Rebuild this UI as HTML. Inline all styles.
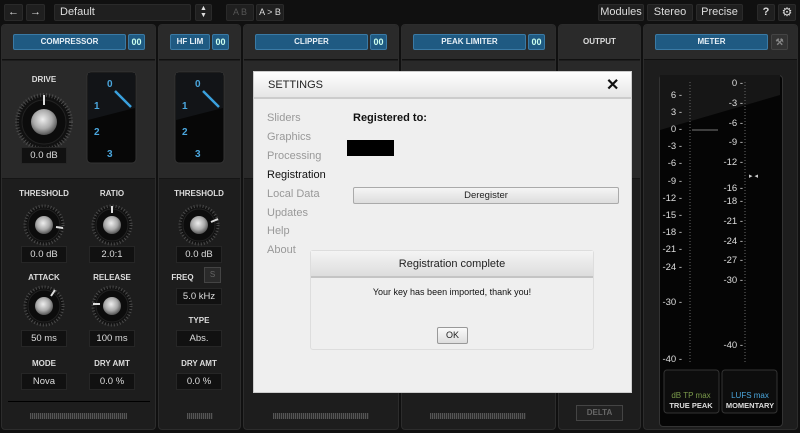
<!DOCTYPE html>
<html><head><meta charset="utf-8"><style>
*{box-sizing:border-box;margin:0;padding:0}
body{width:800px;height:433px;background:#101010;font-family:"Liberation Sans",sans-serif;position:relative;overflow:hidden}
.a{position:absolute}
.tb{position:absolute;top:4px;height:17px;background:#1f1f1f;border:1px solid #2a2a2a;border-radius:2px;color:#ddd;font-size:11px;line-height:15px;text-align:center}
.panel{position:absolute;top:24px;height:406px;background:#1d1d1d;border:1px solid #2c2c2c;border-radius:4px;overflow:hidden}
.ph{position:absolute;left:0;right:0;top:0;height:35px;background:#2a2a2a;border-bottom:1px solid #111}
.pu{position:absolute;left:0;right:0;top:36px;height:118px;background:#292929;border-bottom:1px solid #151515}
.hb{position:absolute;top:9px;height:16px;background:#1f5a82;border:1px solid #3a7aa5;border-radius:2px;color:#e8f0f6;font-size:8px;font-weight:bold;line-height:14px;text-align:center}
.lk{position:absolute;top:9px;width:17px;height:16px;background:#1f5a82;border:1px solid #3a7aa5;border-radius:2px;color:#cfe;font-size:9px;font-weight:bold;line-height:14px;text-align:center}
.lbl{position:absolute;color:#ddd;font-size:8px;font-weight:bold;text-align:center;width:60px}
.val{position:absolute;width:46px;height:17px;background:#111;border:1px solid #262626;color:#ddd;font-size:9.5px;line-height:15px;text-align:center}
.scr{position:absolute;height:6px;background:repeating-linear-gradient(90deg,#555 0 1px,#2a2a2a 1px 2px)}
.dsc{color:#999;font-size:11px;position:absolute;left:13px}
</style></head><body>
<div class="tb" style="left:4px;width:19px">&#8592;</div>
<div class="tb" style="left:26px;width:19px">&#8594;</div>
<div class="tb" style="left:54px;width:137px;text-align:left;padding-left:5px">Default</div>
<div class="tb" style="left:195px;width:17px;font-size:7px;line-height:7px">▲<br>▼</div>
<div class="tb" style="left:226px;width:28px;color:#555;font-size:9px">A B</div>
<div class="tb" style="left:256px;width:28px;font-size:9px">A &gt; B</div>
<div class="tb" style="left:598px;width:46px">Modules</div>
<div class="tb" style="left:647px;width:46px">Stereo</div>
<div class="tb" style="left:696px;width:47px">Precise</div>
<div class="tb" style="left:757px;width:18px;font-weight:bold">?</div>
<div class="tb" style="left:778px;width:18px;font-size:12px">⚙</div>

<div class="panel" style="left:1px;width:155px">
 <div class="ph"><div class="hb" style="left:11px;width:113px">COMPRESSOR</div><div class="lk" style="left:126px">00</div></div>
 <div class="pu"></div>
</div>
<div class="panel" style="left:158px;width:83px">
 <div class="ph"><div class="hb" style="left:11px;width:40px">HF LIM</div><div class="lk" style="left:53px">00</div></div>
 <div class="pu"></div>
</div>
<div class="panel" style="left:243px;width:156px">
 <div class="ph"><div class="hb" style="left:11px;width:113px">CLIPPER</div><div class="lk" style="left:126px">00</div></div>
 <div class="pu"></div>
</div>
<div class="panel" style="left:401px;width:155px">
 <div class="ph"><div class="hb" style="left:11px;width:113px">PEAK LIMITER</div><div class="lk" style="left:126px">00</div></div>
 <div class="pu"></div>
</div>
<div class="panel" style="left:558px;width:83px">
 <div class="ph"><div class="a" style="left:0;right:0;top:12px;text-align:center;color:#ddd;font-size:8px;font-weight:bold">OUTPUT</div></div>
 <div class="pu"></div>
 <div class="a" style="left:17px;top:380px;width:47px;height:16px;background:#222;border:1px solid #444;color:#666;font-size:8px;line-height:14px;text-align:center;font-weight:bold">DELTA</div>
</div>
<div class="panel" style="left:643px;width:155px">
 <div class="ph"><div class="hb" style="left:11px;width:113px">METER</div><div class="lk" style="left:127px;background:#333;border-color:#444;color:#888">⚒</div></div>
 <div class="a" style="left:15px;top:50px;width:124px;height:352px;background:#050505;border:1px solid #333;border-radius:4px"></div>
</div>

<svg class="a" style="left:0;top:0" width="800" height="433">
 <defs>
  <radialGradient id="kg" cx="45%" cy="40%" r="60%"><stop offset="0" stop-color="#eee"/><stop offset=".6" stop-color="#aaa"/><stop offset="1" stop-color="#555"/></radialGradient>
 </defs>
 <g transform="translate(44,122)"><circle r="27" fill="#111" stroke="#4a4a4a" stroke-width="4" stroke-dasharray="1 2"/><circle r="22" fill="#0c0c0c" stroke="#222"/><circle r="13" fill="url(#kg)"/><line x1="0" y1="-27" x2="0" y2="-17" stroke="#ddd" stroke-width="2"/></g>
 <g transform="translate(44,225)"><circle r="19" fill="#111" stroke="#4a4a4a" stroke-width="3" stroke-dasharray="1 2"/><circle r="16" fill="#0c0c0c" stroke="#222"/><circle r="9" fill="url(#kg)"/><line x1="12" y1="2" x2="19" y2="3" stroke="#ddd" stroke-width="2"/></g>
 <g transform="translate(112,225)"><circle r="19" fill="#111" stroke="#4a4a4a" stroke-width="3" stroke-dasharray="1 2"/><circle r="16" fill="#0c0c0c" stroke="#222"/><circle r="9" fill="url(#kg)"/><line x1="0" y1="-12" x2="0" y2="-19" stroke="#ddd" stroke-width="2"/></g>
 <g transform="translate(44,306)"><circle r="19" fill="#111" stroke="#4a4a4a" stroke-width="3" stroke-dasharray="1 2"/><circle r="16" fill="#0c0c0c" stroke="#222"/><circle r="9" fill="url(#kg)"/><line x1="7" y1="-10" x2="11" y2="-16" stroke="#ddd" stroke-width="2"/></g>
 <g transform="translate(112,306)"><circle r="19" fill="#111" stroke="#4a4a4a" stroke-width="3" stroke-dasharray="1 2"/><circle r="16" fill="#0c0c0c" stroke="#222"/><circle r="9" fill="url(#kg)"/><line x1="-12" y1="-2" x2="-19" y2="-2" stroke="#ddd" stroke-width="2"/></g>
 <g transform="translate(199,225)"><circle r="19" fill="#111" stroke="#4a4a4a" stroke-width="3" stroke-dasharray="1 2"/><circle r="16" fill="#0c0c0c" stroke="#222"/><circle r="9" fill="url(#kg)"/><line x1="12" y1="-3" x2="19" y2="-6" stroke="#ddd" stroke-width="2"/></g>
 <rect x="87" y="72" width="49" height="91" rx="4" fill="#070707" stroke="#333"/>
 <polygon points="88,73 135,73 135,108 88,120" fill="#121417"/>
 <line x1="115" y1="91" x2="131" y2="107" stroke="#3aa0dd" stroke-width="2.5"/>
 <rect x="175" y="72" width="49" height="91" rx="4" fill="#070707" stroke="#333"/>
 <polygon points="176,73 223,73 223,108 176,120" fill="#121417"/>
 <line x1="203" y1="91" x2="219" y2="107" stroke="#3aa0dd" stroke-width="2.5"/>
 <g fill="#4aa6dd" font-size="10" font-weight="bold" font-family="Liberation Sans">
  <text x="107" y="87">0</text><text x="94" y="109">1</text><text x="94" y="135">2</text><text x="107" y="157">3</text>
  <text x="195" y="87">0</text><text x="182" y="109">1</text><text x="182" y="135">2</text><text x="195" y="157">3</text>
 </g>
 <polygon points="660,75 780,75 780,95 660,130" fill="#161616"/>
 <line x1="690" y1="82" x2="690" y2="362" stroke="#666" stroke-dasharray="1 2"/>
 <line x1="745" y1="82" x2="745" y2="362" stroke="#666" stroke-dasharray="1 2"/>
 <line x1="692" y1="130" x2="718" y2="130" stroke="#777"/>
 <g fill="#ddd" font-size="9.5" font-family="Liberation Sans" text-anchor="end">
  <text x="682" y="98">6 -</text><text x="682" y="115">3 -</text><text x="682" y="132">0 -</text><text x="682" y="149">-3 -</text><text x="682" y="166">-6 -</text><text x="682" y="184">-9 -</text><text x="682" y="201">-12 -</text><text x="682" y="218">-15 -</text><text x="682" y="235">-18 -</text><text x="682" y="252">-21 -</text><text x="682" y="270">-24 -</text><text x="682" y="305">-30 -</text><text x="682" y="362">-40 -</text>
  <text x="743" y="86">0 -</text><text x="743" y="106">-3 -</text><text x="743" y="126">-6 -</text><text x="743" y="145">-9 -</text><text x="743" y="165">-12 -</text><text x="743" y="191">-16 -</text><text x="743" y="204">-18 -</text><text x="743" y="224">-21 -</text><text x="743" y="244">-24 -</text><text x="743" y="263">-27 -</text><text x="743" y="283">-30 -</text><text x="743" y="348">-40 -</text>
 </g>
 <text x="749" y="178" fill="#ccc" font-size="7">▸ ◂</text>
 <rect x="664" y="370" width="55" height="43" rx="3" fill="#0d0d0d" stroke="#333"/>
 <rect x="722" y="370" width="55" height="43" rx="3" fill="#0d0d0d" stroke="#333"/>
 <g font-size="8" font-family="Liberation Sans" text-anchor="middle">
  <text x="691" y="398" fill="#7a9a4a">dB TP max</text><text x="691" y="408" fill="#ddd" font-weight="bold" font-size="7.5">TRUE PEAK</text>
  <text x="750" y="398" fill="#4aa6dd">LUFS max</text><text x="750" y="408" fill="#ddd" font-weight="bold" font-size="7.5">MOMENTARY</text>
 </g>
</svg>

<div class="lbl" style="left:14px;top:75px">DRIVE</div>
<div class="val" style="left:21px;top:147px">0.0 dB</div>
<div class="lbl" style="left:14px;top:189px">THRESHOLD</div>
<div class="lbl" style="left:82px;top:189px">RATIO</div>
<div class="val" style="left:21px;top:246px">0.0 dB</div>
<div class="val" style="left:89px;top:246px">2.0:1</div>
<div class="lbl" style="left:14px;top:273px">ATTACK</div>
<div class="lbl" style="left:82px;top:273px">RELEASE</div>
<div class="val" style="left:21px;top:330px">50 ms</div>
<div class="val" style="left:89px;top:330px">100 ms</div>
<div class="lbl" style="left:14px;top:359px">MODE</div>
<div class="lbl" style="left:82px;top:359px">DRY AMT</div>
<div class="val" style="left:21px;top:373px">Nova</div>
<div class="val" style="left:89px;top:373px">0.0 %</div>
<div class="lbl" style="left:169px;top:189px">THRESHOLD</div>
<div class="val" style="left:176px;top:246px">0.0 dB</div>
<div class="lbl" style="left:160px;top:273px;width:45px">FREQ</div>
<div class="a" style="left:204px;top:267px;width:17px;height:16px;background:#2a2a2a;border:1px solid #444;color:#666;font-size:8px;text-align:center;line-height:14px">S</div>
<div class="val" style="left:176px;top:288px">5.0 kHz</div>
<div class="lbl" style="left:169px;top:316px">TYPE</div>
<div class="val" style="left:176px;top:330px">Abs.</div>
<div class="lbl" style="left:169px;top:359px">DRY AMT</div>
<div class="val" style="left:176px;top:373px">0.0 %</div>
<div class="a" style="left:8px;top:401px;width:142px;height:1px;background:#000"></div>
<div class="scr" style="left:30px;top:413px;width:97px"></div>
<div class="scr" style="left:187px;top:413px;width:26px"></div>
<div class="scr" style="left:273px;top:413px;width:96px"></div>
<div class="scr" style="left:430px;top:413px;width:96px"></div>

<div class="a" style="left:253px;top:71px;width:379px;height:322px;background:#efefef;border:1px solid #ccc">
 <div class="a" style="left:0;right:0;top:0;height:27px;background:linear-gradient(#fff,#e6e6e6);border-bottom:2px solid #ccc"></div>
 <div class="a" style="left:14px;top:7px;font-size:11px;color:#222">SETTINGS</div>
 <div class="a" style="left:352px;top:3px;font-size:16px;font-weight:bold;color:#111">✕</div>
 <div class="dsc" style="top:40px">Sliders</div>
 <div class="dsc" style="top:59px">Graphics</div>
 <div class="dsc" style="top:78px">Processing</div>
 <div class="dsc" style="top:97px;color:#111">Registration</div>
 <div class="dsc" style="top:116px">Local Data</div>
 <div class="dsc" style="top:135px">Updates</div>
 <div class="dsc" style="top:153px">Help</div>
 <div class="dsc" style="top:172px">About</div>
 <div class="a" style="left:99px;top:40px;font-size:11px;font-weight:bold;color:#111">Registered to:</div>
 <div class="a" style="left:93px;top:68px;width:47px;height:16px;background:#000"></div>
 <div class="a" style="left:99px;top:115px;width:266px;height:17px;background:linear-gradient(#f5f5f5,#ddd);border:1px solid #aaa;border-radius:2px;font-size:9.5px;color:#222;text-align:center;line-height:15px">Deregister</div>
 <div class="a" style="left:56px;top:178px;width:284px;height:100px;background:#efefef;border:1px solid #ddd;border-radius:3px">
  <div class="a" style="left:0;right:0;top:0;height:27px;background:linear-gradient(#f4f4f4,#ddd);border-bottom:2px solid #c4c4c4;font-size:11px;color:#222;text-align:center;line-height:27px">Registration complete</div>
  <div class="a" style="left:0;right:0;top:36px;font-size:9px;color:#111;text-align:center">Your key has been imported, thank you!</div>
  <div class="a" style="left:126px;top:76px;width:31px;height:17px;background:linear-gradient(#fafafa,#ddd);border:1px solid #999;border-radius:2px;font-size:9px;text-align:center;line-height:15px;color:#222">OK</div>
 </div>
</div>
</body></html>
